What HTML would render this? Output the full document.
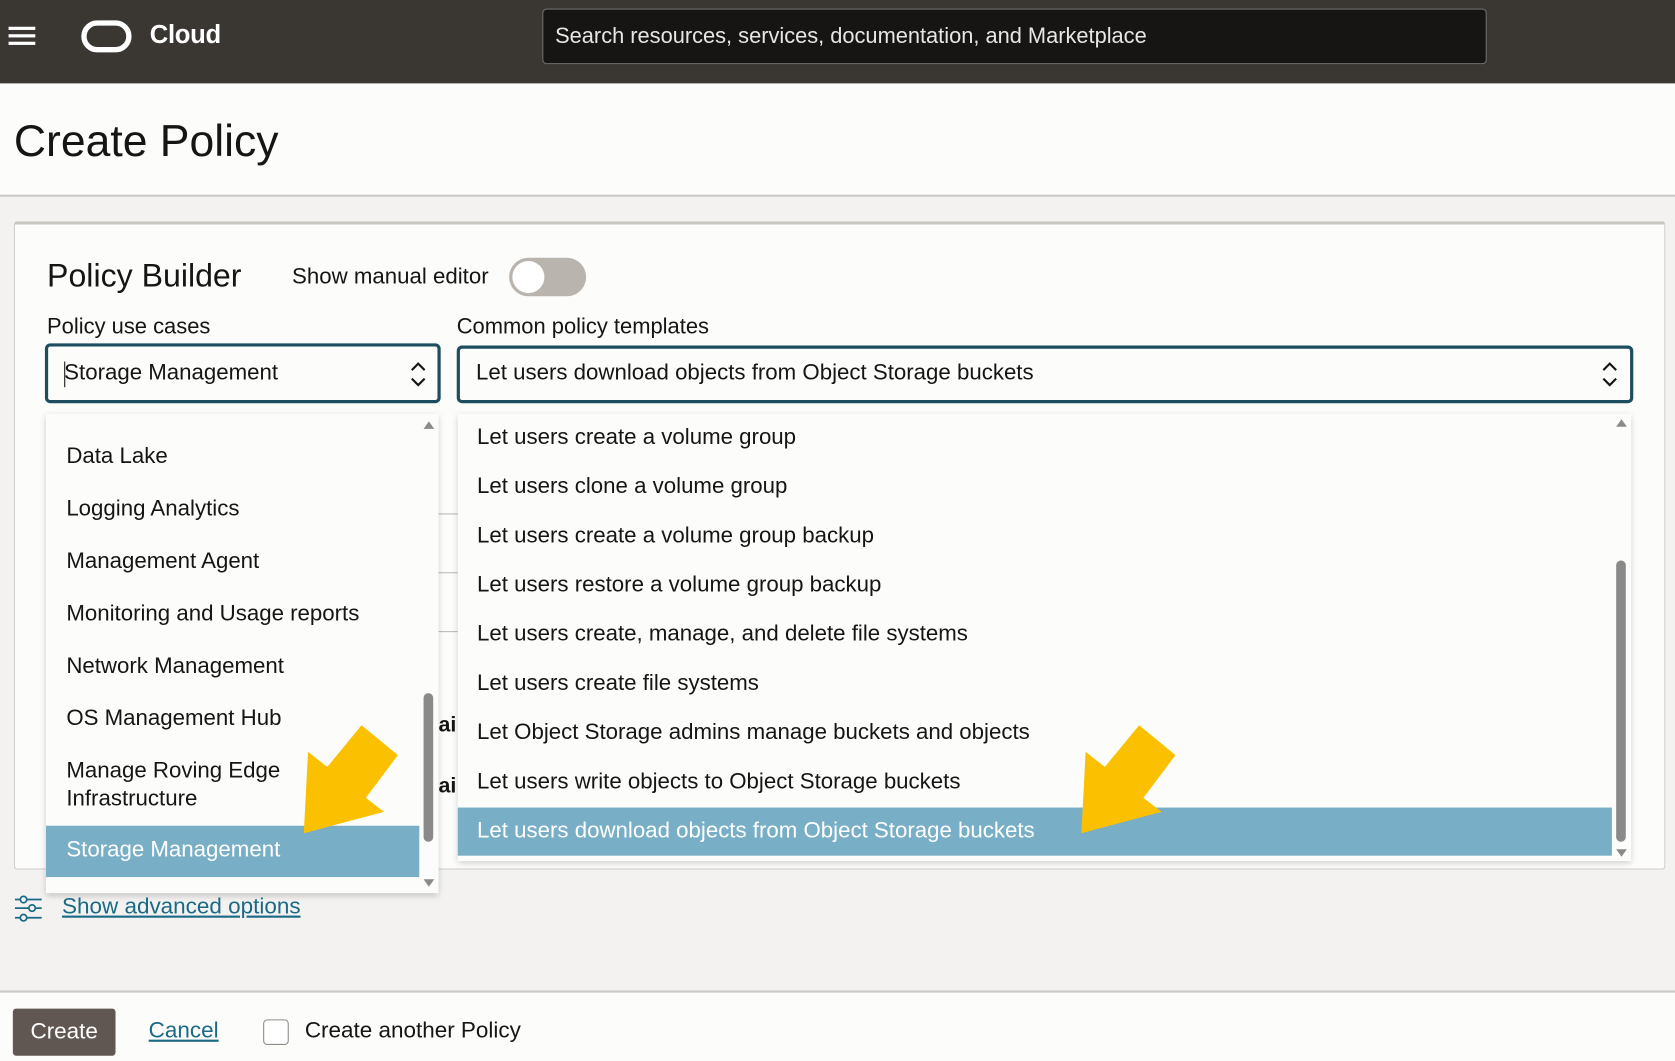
<!DOCTYPE html>
<html><head><meta charset="utf-8"><style>
*{box-sizing:border-box;margin:0;padding:0}
html,body{width:1675px;height:1061px;overflow:hidden;background:#f3f2f1;font-family:"Liberation Sans",Arial,sans-serif;color:#161513}
#w{position:absolute;left:0;top:0;width:1566px;height:992px;transform:scale(1.0696);transform-origin:0 0}
.a{position:absolute}
.it{position:absolute;font-size:20.8px;color:#161513;white-space:nowrap}
</style></head><body><div id="w">
<div class="a" style="left:0;top:0;width:1566px;height:78px;background:#3a3632"></div>
<div class="a" style="left:8px;top:25px;width:25px;height:3px;background:#fff;box-shadow:0 7px 0 #fff,0 14px 0 #fff"></div>
<div class="a" style="left:76px;top:19px;width:47px;height:30px;border:5px solid #fff;border-radius:15px"></div>
<div class="a" style="left:140px;top:19px;font-size:24px;color:#fff;font-weight:bold;letter-spacing:-0.3px">Cloud</div>
<div class="a" style="left:507px;top:8px;width:883px;height:52px;background:#161513;border:1px solid #6f6c69;border-radius:4px"></div>
<div class="a" style="left:519px;top:23px;font-size:20.4px;color:#e8e6e3">Search resources, services, documentation, and Marketplace</div>
<div class="a" style="left:0;top:78px;width:1566px;height:106px;background:#fcfcfb;border-bottom:2px solid #cbc8c5"></div>
<div class="a" style="left:13px;top:108px;font-size:41.6px">Create Policy</div>
<div class="a" style="left:13px;top:207px;width:1544px;height:606px;background:#fcfcfb;border:1px solid #cfccc8;border-top:3px solid #c9c6c2;border-radius:3px"></div>
<div class="a" style="left:44px;top:242px;font-size:30px">Policy Builder</div>
<div class="a" style="left:273px;top:247px;font-size:20.8px">Show manual editor</div>
<div class="a" style="left:476px;top:241px;width:72px;height:36px;background:#b9b4ae;border-radius:18px"></div>
<div class="a" style="left:479px;top:244px;width:30px;height:30px;background:#fff;border-radius:50%"></div>
<div class="a" style="left:44px;top:294px;font-size:20.5px">Policy use cases</div>
<div class="a" style="left:427px;top:294px;font-size:20.5px">Common policy templates</div>
<div class="a" style="left:42px;top:321px;width:370px;height:56px;border:3px solid #1d4e5f;border-radius:5px;background:#fcfcfb"></div>
<div class="it" style="left:60px;top:337px">Storage Management</div>
<div class="a" style="left:60px;top:338px;width:1px;height:24px;background:#161513"></div>
<svg class="a" style="left:382px;top:337px" width="18" height="26"><path d="M3 9l6-6 6 6M3 17l6 6 6-6" fill="none" stroke="#161513" stroke-width="2"/></svg>
<div class="a" style="left:427px;top:323px;width:1100px;height:54px;border:3px solid #1d4e5f;border-radius:5px;background:#fcfcfb"></div>
<div class="it" style="left:445px;top:337px">Let users download objects from Object Storage buckets</div>
<svg class="a" style="left:1496px;top:337px" width="18" height="26"><path d="M3 9l6-6 6 6M3 17l6 6 6-6" fill="none" stroke="#161513" stroke-width="2"/></svg>
<div class="a" style="left:410px;top:480px;width:18px;height:1px;background:#bbb"></div>
<div class="a" style="left:410px;top:535px;width:18px;height:1px;background:#bbb"></div>
<div class="a" style="left:410px;top:590px;width:18px;height:1px;background:#bbb"></div>
<div class="a" style="left:410px;top:667px;font-size:20px;font-weight:bold">ai</div>
<div class="a" style="left:410px;top:724px;font-size:20px;font-weight:bold">ai</div>
<div class="a" style="left:43px;top:387px;width:367px;height:448px;background:#fcfcfb;box-shadow:0 2px 6px rgba(0,0,0,.2);overflow:hidden">
<div class="a" style="left:0;top:385px;width:349px;height:48px;background:#78afc6"></div>
</div>
<div class="it" style="left:62px;top:415px">Data Lake</div>
<div class="it" style="left:62px;top:464px">Logging Analytics</div>
<div class="it" style="left:62px;top:513px">Management Agent</div>
<div class="it" style="left:62px;top:562px">Monitoring and Usage reports</div>
<div class="it" style="left:62px;top:611px">Network Management</div>
<div class="it" style="left:62px;top:660px">OS Management Hub</div>
<div class="it" style="left:62px;top:709px">Manage Roving Edge</div>
<div class="it" style="left:62px;top:735px">Infrastructure</div>
<div class="it" style="left:62px;top:783px;color:#fff">Storage Management</div>
<div class="a" style="left:396px;top:648px;width:9px;height:139px;background:#8a8a8a;border-radius:5px"></div>
<svg class="a" style="left:395px;top:392px" width="12" height="10"><path d="M1 9L6 2l5 7z" fill="#8a8a8a"/></svg>
<svg class="a" style="left:395px;top:821px" width="12" height="10"><path d="M1 1l5 7 5-7z" fill="#8a8a8a"/></svg>
<div class="a" style="left:428px;top:387px;width:1097px;height:418px;background:#fcfcfb;box-shadow:0 2px 6px rgba(0,0,0,.2)"></div>
<div class="a" style="left:428px;top:755px;width:1079px;height:45px;background:#78afc6"></div>
<div class="it" style="left:446px;top:397px">Let users create a volume group</div>
<div class="it" style="left:446px;top:443px">Let users clone a volume group</div>
<div class="it" style="left:446px;top:489px">Let users create a volume group backup</div>
<div class="it" style="left:446px;top:535px">Let users restore a volume group backup</div>
<div class="it" style="left:446px;top:581px">Let users create, manage, and delete file systems</div>
<div class="it" style="left:446px;top:627px">Let users create file systems</div>
<div class="it" style="left:446px;top:673px">Let Object Storage admins manage buckets and objects</div>
<div class="it" style="left:446px;top:719px">Let users write objects to Object Storage buckets</div>
<div class="it" style="left:446px;top:765px;color:#fff">Let users download objects from Object Storage buckets</div>
<div class="a" style="left:1511px;top:524px;width:9px;height:263px;background:#8a8a8a;border-radius:5px"></div>
<svg class="a" style="left:1510px;top:390px" width="12" height="10"><path d="M1 9L6 2l5 7z" fill="#8a8a8a"/></svg>
<svg class="a" style="left:1510px;top:793px" width="12" height="10"><path d="M1 1l5 7 5-7z" fill="#8a8a8a"/></svg>
<svg class="a" style="left:0;top:0" width="1566" height="992">
<polygon points="284,779 288,703 306,717 338,678 372,706 342,746 359,759" fill="#fbc000"/>
<polygon points="1011,779 1015,703 1033,717 1065,678 1099,706 1069,746 1086,759" fill="#fbc000"/>
</svg>
<svg class="a" style="left:13px;top:836px" width="28" height="28" fill="none" stroke="#1a6a85" stroke-width="1.6"><path d="M1 5h5M12 5h14M1 13h13M20 13h6M1 22h5M12 22h14"/><circle cx="9" cy="5" r="3"/><circle cx="17" cy="13" r="3"/><circle cx="9" cy="22" r="3"/></svg>
<div class="a" style="left:58px;top:836px;font-size:21px;color:#1a6a85;text-decoration:underline">Show advanced options</div>
<div class="a" style="left:0;top:926px;width:1566px;height:66px;background:#fcfcfb;border-top:2px solid #cbc8c5"></div>
<div class="a" style="left:12px;top:943px;width:96px;height:44px;background:#605753;border-radius:3px;color:#fff;font-size:21px;text-align:center;line-height:44px">Create</div>
<div class="a" style="left:139px;top:952px;font-size:21px;color:#1a6a85;text-decoration:underline">Cancel</div>
<div class="a" style="left:246px;top:953px;width:24px;height:24px;border:1px solid #8f8b87;border-radius:4px;background:#fff"></div>
<div class="a" style="left:285px;top:952px;font-size:21px">Create another Policy</div>
</div></body></html>
